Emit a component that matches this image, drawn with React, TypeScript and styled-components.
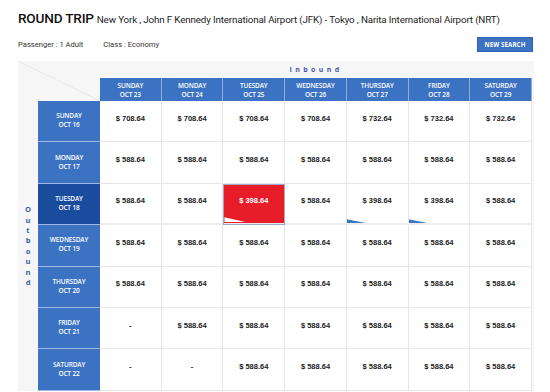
import React from "react";
import styled, { createGlobalStyle, css } from "styled-components";

const Global = createGlobalStyle`
  html, body { margin: 0; padding: 0; background: #ffffff; }
  body { font-family: Roboto, "Liberation Sans", Arial, sans-serif; }
  * { box-sizing: border-box; }
`;

const Page = styled.div`
  width: 550px;
  padding: 10px 18px 0 18px;
`;

const TitleRow = styled.div`
  display: flex;
  align-items: baseline;
  gap: 3px;
  height: 16px;
  white-space: nowrap;
`;

const Title = styled.span`
  font-family: Roboto, "Liberation Sans", sans-serif;
  font-size: 13.6px;
  font-weight: 500;
  color: #111;
  letter-spacing: -0.2px;
`;

const Route = styled.span`
  font-family: Roboto, "Liberation Sans", sans-serif;
  font-size: 9.8px;
  color: #222;
  letter-spacing: -0.15px;
`;

const InfoRow = styled.div`
  display: flex;
  align-items: center;
  margin-top: 11px;
  height: 15px;
`;

const Info = styled.span`
  font-family: Roboto, "Liberation Sans", sans-serif;
  font-size: 7.6px;
  color: #333;
  margin-right: 20px;
`;

const Spacer = styled.div`
  flex: 1;
`;

const SearchButton = styled.button`
  width: 56px;
  height: 15px;
  margin-right: -1px;
  border: 1px solid #2f62b0;
  background: #3b72c2;
  color: #fff;
  font-family: "Open Sans", "Liberation Sans", sans-serif;
  font-size: 6.2px;
  font-weight: 700;
  padding: 0;
  letter-spacing: 0.1px;
`;

const Matrix = styled.div`
  margin-top: 9px;
  width: 516px;
  padding-right: 2px;
  background: #f6f6f6;
  display: grid;
  grid-template-columns: 20px 62px repeat(7, 1fr);
  grid-template-rows: 17px 23px repeat(7, 41.4px);
`;

const Corner = styled.div`
  grid-column: 1 / 3;
  grid-row: 1 / 3;
  background: linear-gradient(
    to top right,
    transparent calc(50% - 0.6px),
    #e2e2e2 50%,
    transparent calc(50% + 0.6px)
  );
`;

const AxisLabel = styled.div`
  grid-column: 3 / 10;
  grid-row: 1;
  display: flex;
  align-items: center;
  justify-content: center;
  font-family: "Open Sans", "Liberation Sans", sans-serif;
  font-size: 7px;
  font-weight: 700;
  letter-spacing: 3.4px;
  color: #3f5ba8;
`;

const SideLabel = styled.div`
  grid-column: 1;
  grid-row: 3 / 10;
  display: flex;
  flex-direction: column;
  align-items: center;
  justify-content: center;
  font-family: "Open Sans", "Liberation Sans", sans-serif;
  font-size: 7.5px;
  font-weight: 700;
  line-height: 10.4px;
  color: #3f5ba8;
`;

const HeadCell = styled.div<{ $dark?: boolean; $row?: boolean }>`
  display: flex;
  flex-direction: column;
  align-items: center;
  justify-content: center;
  background: ${(p) => (p.$dark ? "#1a4c9e" : "#3b72c2")};
  color: #fff;
  font-family: "Open Sans", "Liberation Sans", sans-serif;
  font-size: 6.5px;
  font-weight: 600;
  line-height: 9px;
  letter-spacing: -0.15px;
  ${(p) =>
    p.$row
      ? css`
          grid-column: 2;
          border-bottom: 1px solid #9db8e4;
          padding-bottom: 2px;
        `
      : css`
          grid-row: 2;
          border-right: 1px solid #8eaee0;
        `}
`;

const PriceCell = styled.div<{ $selected?: boolean; $flag?: boolean; $thick?: boolean }>`
  position: relative;
  display: flex;
  align-items: center;
  justify-content: center;
  padding-bottom: 6px;
  background: ${(p) => (p.$selected ? "#e81d2a" : "#ffffff")};
  color: ${(p) => (p.$selected ? "#ffffff" : "#222")};
  font-family: "Liberation Sans", Arial, sans-serif;
  font-size: 7.5px;
  font-weight: 700;
  border-right: 1px solid #e6e6e6;
  border-bottom: ${(p) => (p.$thick ? "2px solid #ececec" : "1px solid #e6e6e6")};
  ${(p) =>
    p.$selected &&
    css`
      outline: 1px solid #9ea8cc;
      outline-offset: -1px;
    `}
  ${(p) =>
    p.$flag &&
    css`
      &::after {
        content: "";
        position: absolute;
        left: ${p.$selected ? "1px" : "0"};
        bottom: ${p.$selected ? "1px" : "0"};
        width: ${p.$selected ? "22px" : "20px"};
        height: ${p.$selected ? "5px" : "4px"};
        background: ${p.$selected ? "#ffffff" : "#3b78c2"};
        clip-path: polygon(0 0, 100% 100%, 0 100%);
      }
    `}
`;

const cols = [
  ["SUNDAY", "OCT 23"],
  ["MONDAY", "OCT 24"],
  ["TUESDAY", "OCT 25"],
  ["WEDNESDAY", "OCT 26"],
  ["THURSDAY", "OCT 27"],
  ["FRIDAY", "OCT 28"],
  ["SATURDAY", "OCT 29"],
];

const rows = [
  ["SUNDAY", "OCT 16"],
  ["MONDAY", "OCT 17"],
  ["TUESDAY", "OCT 18"],
  ["WEDNESDAY", "OCT 19"],
  ["THURSDAY", "OCT 20"],
  ["FRIDAY", "OCT 21"],
  ["SATURDAY", "OCT 22"],
];

const A = "$ 588.64";
const prices: string[][] = [
  ["$ 708.64", "$ 708.64", "$ 708.64", "$ 708.64", "$ 732.64", "$ 732.64", "$ 732.64"],
  [A, A, A, A, A, A, A],
  [A, A, "$ 398.64", A, "$ 398.64", "$ 398.64", A],
  [A, A, A, A, A, A, A],
  [A, A, A, A, A, A, A],
  ["-", A, A, A, A, A, A],
  ["-", "-", A, A, A, A, A],
];

const SELECTED_ROW = 2;
const SELECTED_COL = 2;

export default function App() {
  return (
    <>
      <Global />
      <Page>
        <TitleRow>
          <Title>ROUND TRIP</Title>
          <Route>
            New York , John F Kennedy International Airport (JFK) - Tokyo , Narita International Airport (NRT)
          </Route>
        </TitleRow>
        <InfoRow>
          <Info>Passenger : 1 Adult</Info>
          <Info>Class : Economy</Info>
          <Spacer />
          <SearchButton>NEW SEARCH</SearchButton>
        </InfoRow>
        <Matrix>
          <Corner />
          <AxisLabel>Inbound</AxisLabel>
          <SideLabel>
            {"Outbound".split("").map((c, i) => (
              <span key={i}>{c}</span>
            ))}
          </SideLabel>
          {cols.map(([d, o], i) => (
            <HeadCell key={"c" + i} style={{ gridColumn: i + 3 }}>
              <span>{d}</span>
              <span>{o}</span>
            </HeadCell>
          ))}
          {rows.map(([d, o], r) => (
            <React.Fragment key={"r" + r}>
              <HeadCell $row $dark={r === SELECTED_ROW} style={{ gridRow: r + 3 }}>
                <span>{d}</span>
                <span>{o}</span>
              </HeadCell>
              {prices[r].map((p, c) => (
                <PriceCell
                  key={c}
                  $selected={r === SELECTED_ROW && c === SELECTED_COL}
                  $flag={p === "$ 398.64"}
                  $thick={r === SELECTED_ROW}
                  style={{ gridRow: r + 3, gridColumn: c + 3 }}
                >
                  {p}
                </PriceCell>
              ))}
            </React.Fragment>
          ))}
        </Matrix>
      </Page>
    </>
  );
}
